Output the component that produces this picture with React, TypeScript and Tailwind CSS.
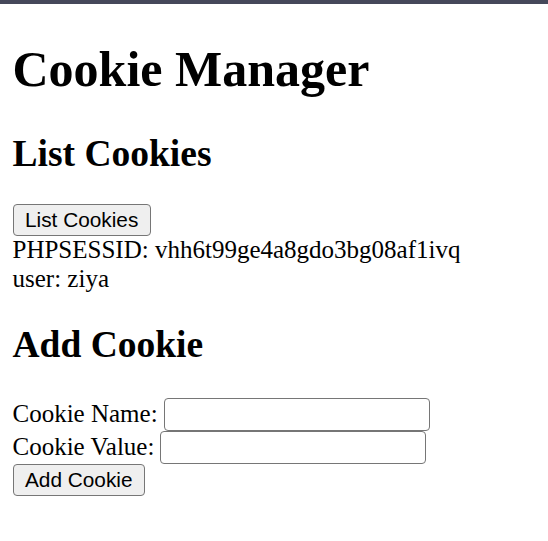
export default function App() {
  const cookies = [
    { name: "PHPSESSID", value: "vhh6t99ge4a8gdo3bg08af1ivq" },
    { name: "user", value: "ziya" },
  ];

  const btn =
    "bg-[#efefef] border-[1.5px] border-[#767676] rounded-[4px] px-[11.5px] h-[32px] font-['Liberation_Sans',Arial,sans-serif] text-[20.8px] leading-[1.15] text-black";
  const input =
    "w-[266px] h-[33px] border-[1.5px] border-[#767676] rounded-[4px] bg-white px-[3px]";

  return (
    <div className="min-h-screen bg-white text-black font-['Liberation_Serif','Times_New_Roman',serif] text-[25px] leading-[1.15]">
      <div className="h-[4px] bg-[#45485a]" />
      <div className="px-[12.5px] pb-[12.5px]">
        <h1 className="text-[50px] font-bold leading-[1.15] mt-[37px] mb-[33.5px]">Cookie Manager</h1>

        <h2 className="text-[37.5px] font-bold leading-[1.15] mt-[31px] mb-[29px]">List Cookies</h2>
        <div className="flex">
          <button className={btn}>List Cookies</button>
        </div>
        <div>
          {cookies.map((c) => (
            <div key={c.name}>
              {c.name}: {c.value}
            </div>
          ))}
        </div>

        <h2 className="text-[37.5px] font-bold leading-[1.15] mt-[29px] mb-[32px]">Add Cookie</h2>
        <form onSubmit={(e) => e.preventDefault()}>
          <div className="flex items-center h-[33px]">
            <label>Cookie Name:</label>
            <input className={`${input} ml-[6px]`} />
          </div>
          <div className="flex items-center h-[33px]">
            <label>Cookie Value:</label>
            <input className={`${input} ml-[6px]`} />
          </div>
          <div className="flex">
            <button type="submit" className={btn}>Add Cookie</button>
          </div>
        </form>
      </div>
    </div>
  );
}
